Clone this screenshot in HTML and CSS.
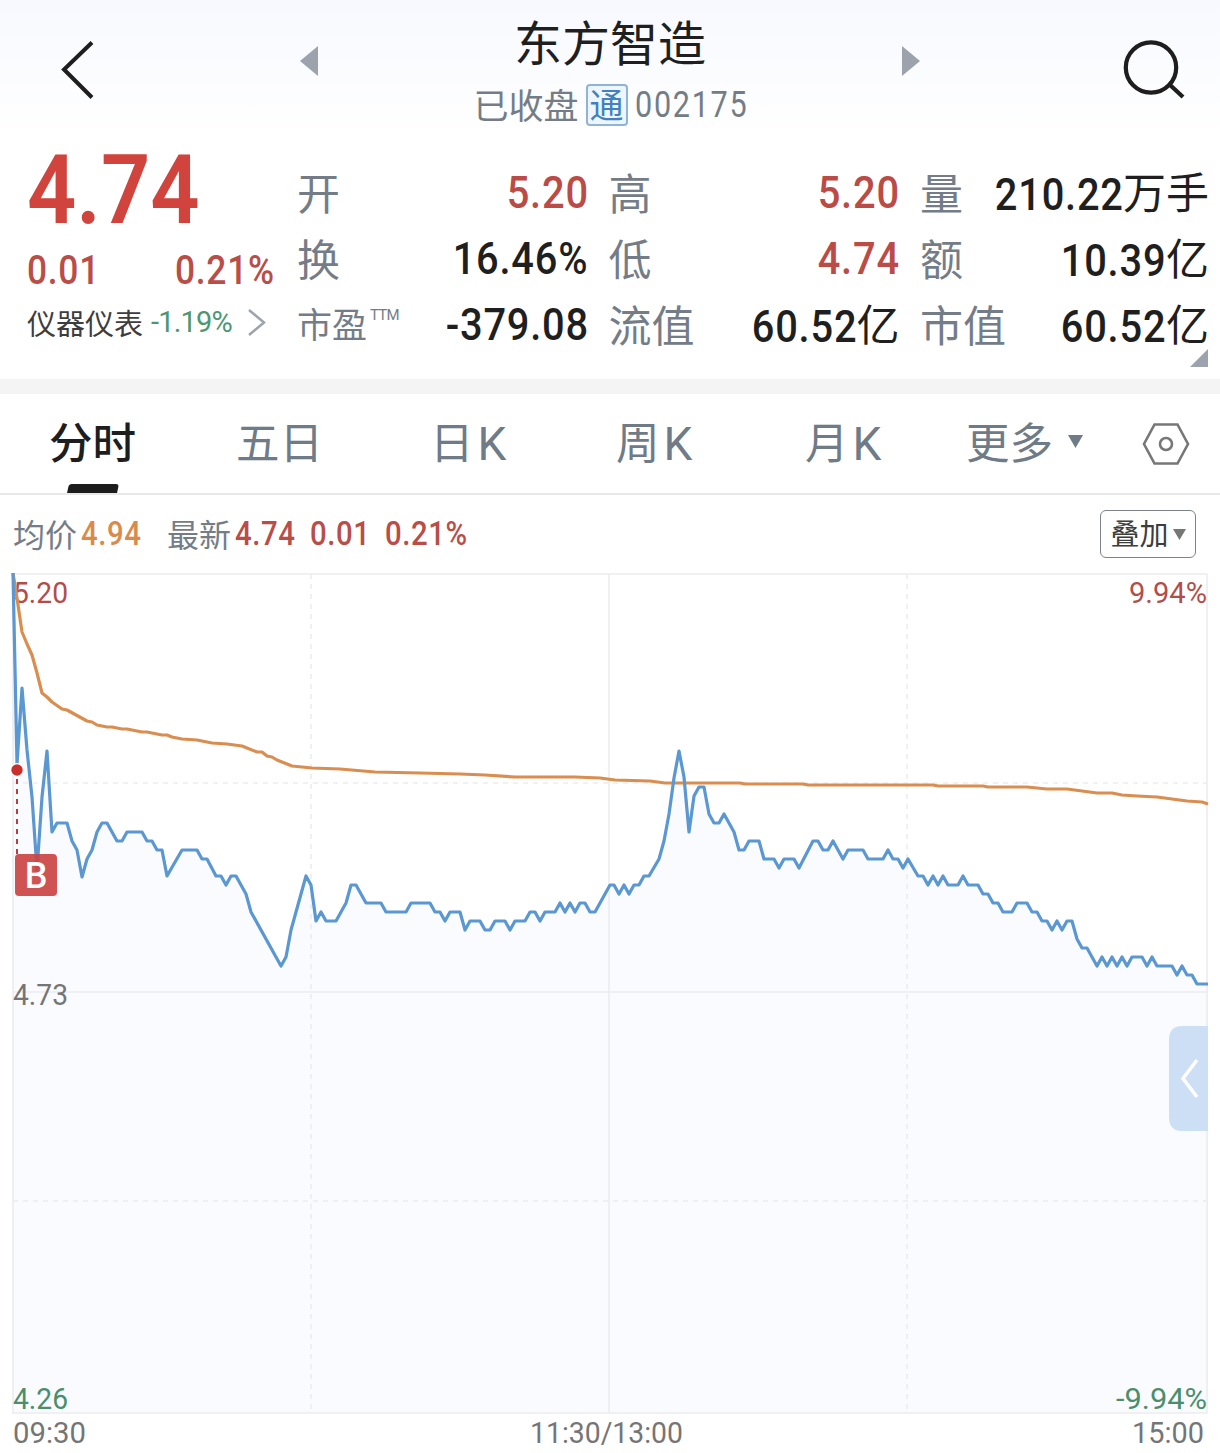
FILE: index.html
```html
<!DOCTYPE html>
<html lang="zh-CN">
<head>
<meta charset="utf-8">
<title>东方智造 002175</title>
<link rel="stylesheet" href="styles.css">
</head>
<body>
<header class="topbar">
  <svg class="back" width="40" height="64" viewBox="0 0 40 64"><path d="M37 4.500 9 31.500 37 59.500" fill="none" stroke="#1e1e1e" stroke-width="4"/></svg>
  <svg class="prev" width="18" height="30" viewBox="0 0 18 30"><path d="M18 0V30L0 15z" fill="#9ca3ad"/></svg>
  <div class="heading">
    <h1 class="name">东方智造</h1>
    <div class="sub"><span class="state">已收盘</span><span class="tag">通</span><span class="code">002175</span></div>
  </div>
  <svg class="next" width="18" height="30" viewBox="0 0 18 30"><path d="M0 0V30L18 15z" fill="#9ca3ad"/></svg>
  <svg class="search" width="66" height="62" viewBox="0 0 66 62"><g fill="none" stroke="#1e1e1e" stroke-width="4.200"><circle cx="30" cy="27.500" r="25.200"/><path d="M48 44 62 57"/></g></svg>
</header>

<section class="quote">
  <div class="summary">
    <div class="price"><span class="num">4.74</span></div>
    <div class="change"><span class="num">0.01</span><span class="num end">0.21%</span></div>
    <div class="sector"><span>仪器仪表</span><span class="sector-pct">-1.19%</span>
      <svg width="20" height="28" viewBox="0 0 20 28"><path d="M2 2 17 14.500 2 27" fill="none" stroke="#9ca3ad" stroke-width="2.500"/></svg>
    </div>
  </div>
  <dl class="stats">
    <div class="stat"><dt>开</dt><dd class="up"><span class="num end">5.20</span></dd></div>
    <div class="stat"><dt>高</dt><dd class="up"><span class="num end">5.20</span></dd></div>
    <div class="stat"><dt>量</dt><dd><span class="num end low">210.22</span><span class="unit">万手</span></dd></div>
    <div class="stat"><dt>换</dt><dd><span class="num end">16.46%</span></dd></div>
    <div class="stat"><dt>低</dt><dd class="up"><span class="num end">4.74</span></dd></div>
    <div class="stat"><dt>额</dt><dd><span class="num end low">10.39</span><span class="unit">亿</span></dd></div>
    <div class="stat"><dt class="small">市盈<sup>TTM</sup></dt><dd><span class="num end">-379.08</span></dd></div>
    <div class="stat"><dt>流值</dt><dd><span class="num end low">60.52</span><span class="unit">亿</span></dd></div>
    <div class="stat"><dt>市值</dt><dd><span class="num end low">60.52</span><span class="unit">亿</span></dd></div>
  </dl>
  <svg class="expand" width="18" height="18" viewBox="0 0 18 18"><path d="M18 0V18H0z" fill="#9ca3ad"/></svg>
</section>

<nav class="tabs">
  <span class="tab active">分时</span>
  <span class="tab">五日</span>
  <span class="tab">日<span class="k">K</span></span>
  <span class="tab">周<span class="k">K</span></span>
  <span class="tab">月<span class="k">K</span></span>
  <span class="tab">更多<svg class="caret" width="15" height="13" viewBox="0 0 15 13"><path d="M0 0H15L7.500 13z" fill="#6f7b86"/></svg></span>
  <svg class="gear" width="48" height="44" viewBox="0 0 48 44"><g fill="none" stroke="#777" stroke-width="2.600"><path d="M12.500 2.500H35.500L46 22 35.500 41.500H12.500L2 22z"/><circle cx="24" cy="22" r="6"/></g></svg>
</nav>

<div class="legend">
  <span class="label">均价</span><span class="num avg">4.94</span>
  <span class="label latest">最新</span><span class="num n1">4.74</span><span class="num n2">0.01</span><span class="num n3">0.21%</span>
  <button class="overlay"><span>叠加</span><svg width="13" height="11" viewBox="0 0 13 11"><path d="M0 0H13L6.500 11z" fill="#777"/></svg></button>
</div>

<main>
<svg class="chart" width="1220" height="880" viewBox="0 573 1220 880">
  <path class="area" d="M13 573 17 764 22 688 27 750 32 797 37 870 42 797 47 751 52 832 57 823 67 823 72 841 77 850 82 877 87 859 92 850 97 832 102 823 107 823 117 841 122 841 127 832 142 832 147 841 152 841 157 850 162 850 167 876 182 850 197 850 202 859 207 859 216 876 221 876 226 885 231 876 236 876 246 894 251 912 281 966 286 957 291 930 306 876 311 885 316 921 321 912 326 921 336 921 346 903 351 885 356 885 366 903 381 903 386 912 406 912 411 903 430 903 435 912 440 912 445 921 450 912 460 912 465 930 470 921 480 921 485 930 490 930 495 921 505 921 510 930 515 921 525 921 530 912 535 912 540 921 545 912 555 912 560 903 565 912 570 903 575 912 580 903 585 903 590 912 595 912 610 885 614 885 619 894 624 885 629 894 634 885 639 885 644 876 649 876 659 859 664 841 669 814 674 778 679 751 684 777 689 832 694 796 699 787 704 787 709 814 714 823 719 823 724 814 734 832 739 850 744 850 749 841 759 841 764 859 774 859 779 868 784 859 794 859 799 868 813 841 818 841 823 850 828 850 833 841 843 859 848 850 863 850 868 859 883 859 888 850 893 859 898 859 903 868 908 859 918 876 923 876 928 885 933 876 938 885 943 876 948 885 958 885 963 876 968 885 978 885 983 894 988 894 993 903 998 903 1003 912 1012 912 1017 903 1027 903 1032 912 1037 912 1042 921 1047 921 1052 930 1057 921 1062 930 1067 921 1072 921 1077 939 1082 948 1087 948 1097 966 1102 957 1107 966 1112 957 1117 966 1122 957 1127 966 1132 957 1142 957 1147 966 1152 957 1157 966 1172 966 1177 975 1182 966 1187 975 1192 975 1197 984 1208 984V1413H13z"/>
  <g class="grid">
    <path d="M13 574H1207V1413H13zM13 992H1207M609 574V1413"/>
    <path stroke-dasharray="5 5" d="M311 574V1413M907 574V1413M13 783H1207M13 1201H1207"/>
  </g>
  <g class="axis">
    <text class="up" x="13" y="603" textLength="55" lengthAdjust="spacingAndGlyphs">5.20</text>
    <text class="up" x="1129" y="603" textLength="78" lengthAdjust="spacingAndGlyphs">9.94%</text>
    <text x="13" y="1005" textLength="55" lengthAdjust="spacingAndGlyphs">4.73</text>
    <text class="down" x="13" y="1409" textLength="55" lengthAdjust="spacingAndGlyphs">4.26</text>
    <text class="down" x="1116" y="1409" textLength="91" lengthAdjust="spacingAndGlyphs">-9.94%</text>
    <text x="13" y="1443" textLength="73" lengthAdjust="spacingAndGlyphs">09:30</text>
    <text x="530" y="1443" textLength="153" lengthAdjust="spacingAndGlyphs">11:30/13:00</text>
    <text x="1132" y="1443" textLength="72" lengthAdjust="spacingAndGlyphs">15:00</text>
  </g>
  <polyline class="line average" points="13,573 17,598 22,632 27,644 32,655 37,673 42,693 47,697 52,702 62,709 67,710 87,721 92,722 97,725 107,727 112,727 122,729 127,729 142,732 147,732 162,735 167,735 172,737 182,739 197,740 212,743 227,744 242,746 257,752 262,752 267,756 272,757 277,760 292,766 302,767 312,768 340,769 375,772 420,773 460,774 485,775 515,777 575,777 600,778 615,780 650,781 665,783 740,783 745,784 803,784 808,785 933,785 938,786 983,786 988,787 1027,787 1047,789 1067,789 1097,793 1112,793 1122,795 1137,796 1157,797 1172,799 1187,801 1202,802 1208,804"/>
  <polyline class="line trend" points="13,573 17,764 22,688 27,750 32,797 37,870 42,797 47,751 52,832 57,823 67,823 72,841 77,850 82,877 87,859 92,850 97,832 102,823 107,823 117,841 122,841 127,832 142,832 147,841 152,841 157,850 162,850 167,876 182,850 197,850 202,859 207,859 216,876 221,876 226,885 231,876 236,876 246,894 251,912 281,966 286,957 291,930 306,876 311,885 316,921 321,912 326,921 336,921 346,903 351,885 356,885 366,903 381,903 386,912 406,912 411,903 430,903 435,912 440,912 445,921 450,912 460,912 465,930 470,921 480,921 485,930 490,930 495,921 505,921 510,930 515,921 525,921 530,912 535,912 540,921 545,912 555,912 560,903 565,912 570,903 575,912 580,903 585,903 590,912 595,912 610,885 614,885 619,894 624,885 629,894 634,885 639,885 644,876 649,876 659,859 664,841 669,814 674,778 679,751 684,777 689,832 694,796 699,787 704,787 709,814 714,823 719,823 724,814 734,832 739,850 744,850 749,841 759,841 764,859 774,859 779,868 784,859 794,859 799,868 813,841 818,841 823,850 828,850 833,841 843,859 848,850 863,850 868,859 883,859 888,850 893,859 898,859 903,868 908,859 918,876 923,876 928,885 933,876 938,885 943,876 948,885 958,885 963,876 968,885 978,885 983,894 988,894 993,903 998,903 1003,912 1012,912 1017,903 1027,903 1032,912 1037,912 1042,921 1047,921 1052,930 1057,921 1062,930 1067,921 1072,921 1077,939 1082,948 1087,948 1097,966 1102,957 1107,966 1112,957 1117,966 1122,957 1127,966 1132,957 1142,957 1147,966 1152,957 1157,966 1172,966 1177,975 1182,966 1187,975 1192,975 1197,984 1208,984"/>
  <path d="M17 779V854" stroke="#c0393b" stroke-width="2" stroke-dasharray="5 5"/>
  <circle cx="17" cy="770" r="7" fill="#fff"/>
  <circle cx="17" cy="770" r="5.700" fill="#c9302c"/>
  <rect x="15" y="854" width="42" height="42" rx="4" fill="#cb4444" fill-opacity=".92"/>
  <text class="mark" x="36" y="888" text-anchor="middle">B</text>
  <path d="M1208 1026H1182Q1169 1026 1169 1040V1117Q1169 1131 1182 1131H1208z" fill="#cddff4"/>
  <path d="M1197 1060 1183 1078.500 1197 1097" fill="none" stroke="#fff" stroke-width="3.500"/>
</svg>
</main>
</body>
</html>
```
FILE: styles.css
```css
* { box-sizing: border-box; }
body {
  margin: 0;
  width: 1220px;
  height: 1453px;
  overflow: hidden;
  background: #fff;
  color: #1f1f1f;
  font-family: Roboto, "Noto Sans CJK SC", sans-serif;
}
svg { display: block; flex: none; }
.num {
  display: inline-block;
  font-weight: 500;
  letter-spacing: .02em;
  transform: scaleX(.885);
  transform-origin: left center;
}
.num.end { transform-origin: right center; margin-right: -.018em; }
.num.low { padding-top: 2px; }

.topbar {
  height: 140px;
  display: flex;
  align-items: flex-start;
  background: linear-gradient(#f7f9fe, #fff);
}
.back { margin: 38px 0 0 55px; }
.prev { margin: 46px 0 0 205px; }
.heading { width: 584px; text-align: center; }
.next { margin-top: 46px; }
.search { margin: 40px 0 0 201px; }
.name { margin: 15px 0 0; font-size: 48px; line-height: 60px; font-weight: 400; }
.sub {
  display: flex;
  justify-content: center;
  align-items: center;
  margin-top: 9px;
  height: 42px;
  line-height: 42px;
  font-size: 35px;
  color: #747d87;
}
.state { padding-top: 5px; }
.tag {
  width: 42px;
  height: 42px;
  margin: 0 7px;
  border: 2px solid #90b3d8;
  border-radius: 4px;
  background: #edf5fd;
  color: #4380bf;
  font-size: 34px;
  line-height: 41px;
}
.code { font-size: 36px; font-weight: 400; width: 112px; letter-spacing: 2px; transform: scaleX(.85); transform-origin: left; }

.quote {
  height: 254px;
  padding: 20px 11px 0 27px;
  display: grid;
  grid-template-columns: 270px 912px;
  border-bottom: 15px solid #f4f4f4;
  position: relative;
}
.price { height: 78px; line-height: 60px; font-size: 96px; color: #d0443d; }
.price .num { font-weight: 600; line-height: 60px; letter-spacing: 0; transform: scaleX(.9); }
.change { display: flex; justify-content: space-between; width: 247px; height: 66px; line-height: 67px; margin-top: -1px; font-size: 40px; color: #b94d48; }
.sector { display: flex; align-items: center; height: 44px; margin-top: -3px; font-size: 29px; color: #3d3d3d; }
.sector-pct { margin: 0 15px 0 8px; color: #4e9670; letter-spacing: -.800px; }
.stats {
  margin: 0;
  display: grid;
  grid-template-columns: 291px 291px 289px;
  column-gap: 20.500px;
  grid-auto-rows: 66px;
}
.stat { display: flex; justify-content: space-between; line-height: 66px; font-size: 45px; white-space: nowrap; }
.stat dt { font-size: 43px; color: #747d87; margin-top: 2px; }
.stat dt.small { font-size: 35px; margin-top: 2px; }
.stat sup { font-size: 15px; line-height: 1; vertical-align: 18px; margin-left: 3px; font-weight: 400; letter-spacing: -.800px; }
.stat dd { margin: 0; display: flex; }
.unit { font-size: 43px; font-weight: 400; padding-top: 1px; }
.up { color: #bb4b46; }
.expand { position: absolute; right: 12px; bottom: 12px; }

.tabs {
  height: 101px;
  display: grid;
  grid-template-columns: 187px 194px 186px 189px 161px 176px 60px;
  padding-left: 49px;
  border-bottom: 2px solid #e8e8e9;
  font-size: 43.500px;
  line-height: 96px;
  color: #6f7b86;
}
.tab { display: flex; align-items: center; position: relative; height: 99px; padding-top: 3px; }
.tab.active { color: #1e1e1e; font-weight: 500; }
.tab.active::after {
  content: "";
  position: absolute;
  left: 19px;
  bottom: 0;
  width: 50px;
  height: 9px;
  background: #1c1c1c;
  border-radius: 3px 3px 0 0;
  transform: skewX(-12deg);
}
.k { font-size: 46px; margin: -3px 0 0 4px; font-weight: 400; }
.caret { margin: -7px 0 0 15px; }
.gear { margin-top: 28px; }

.legend {
  height: 78px;
  padding: 0 24px 0 13px;
  display: flex;
  align-items: center;
  font-size: 32px;
  line-height: 76px;
  color: #747d87;
}
.label { padding-top: 3px; }
.legend .num { color: #b94d48; width: 60px; margin-left: 4px; font-size: 33px; transform: scaleX(.89); }
.legend .avg { color: #d98b4b; }
.legend .latest { margin-left: 26px; }
.legend .n2 { margin-left: 15px; }
.legend .n3 { margin-left: 15px; width: 90px; }
.overlay {
  display: flex;
  align-items: center;
  justify-content: center;
  gap: 4px;
  margin-left: auto;
  width: 96px;
  height: 48px;
  padding: 0;
  border: 1.500px solid #7d8488;
  border-radius: 6px;
  background: #fff;
  color: #3d3d3d;
  font: 29px/42px "Noto Sans CJK SC", sans-serif;
}
.overlay span { margin-top: -4px; }

.area { fill: #f9fbff; }
.grid { fill: none; stroke: #ededf1; stroke-width: 1.600; }
.axis { font-size: 30px; fill: #757575; }
.axis .up { fill: #b34d49; }
.axis .down { fill: #4a8e6b; }
.line { fill: none; stroke-width: 3.200; stroke-linejoin: round; }
.average { stroke: #d98e50; }
.trend { stroke: #5b97d1; }
.mark { font: 500 36px Roboto, sans-serif; fill: #fff; }
```
